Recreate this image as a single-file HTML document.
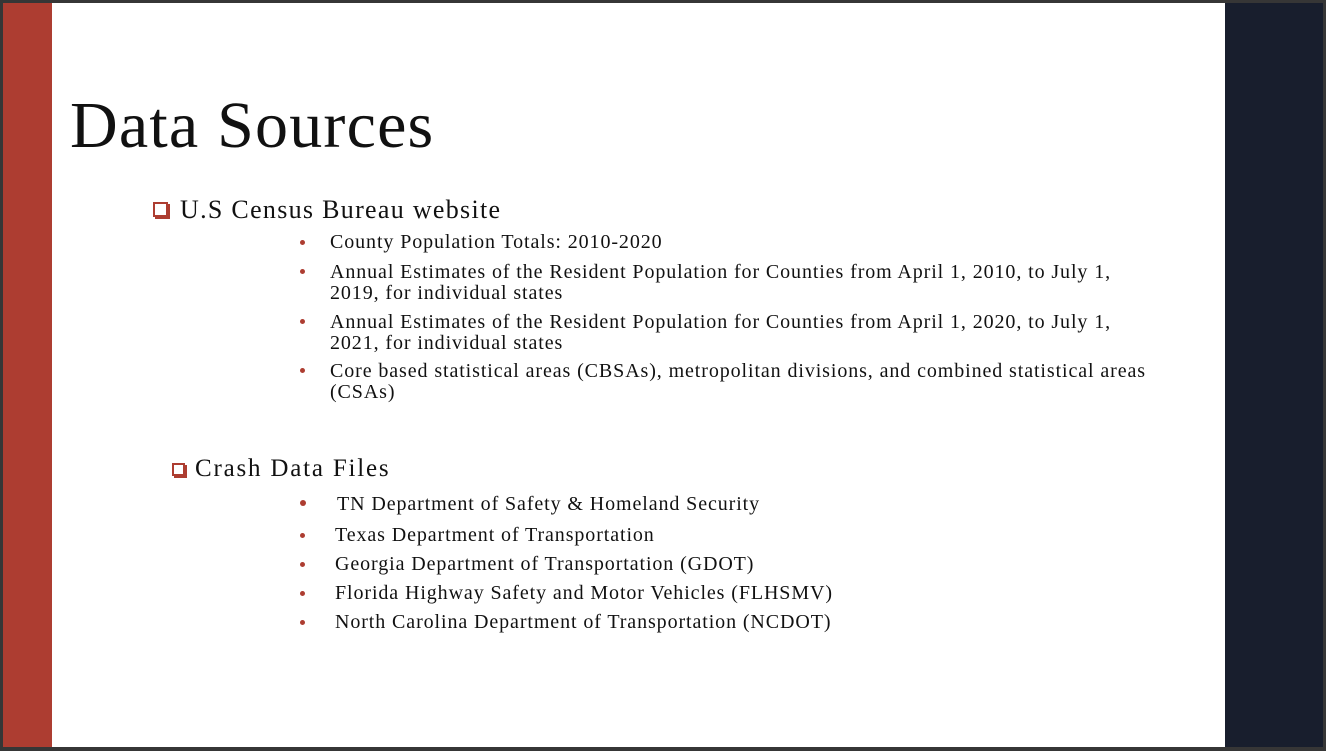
<!DOCTYPE html>
<html><head><meta charset="utf-8"><style>
html,body{margin:0;padding:0;}
body{width:1326px;height:751px;background:#363636;position:relative;overflow:hidden;font-family:"Liberation Serif","DejaVu Serif",serif;color:#111;}
.slide{position:absolute;left:3px;top:3px;width:1320px;height:744px;background:#fff;}
.red{position:absolute;left:3px;top:3px;width:49px;height:744px;background:#ad3d31;}
.navy{position:absolute;left:1225px;top:3px;width:98px;height:744px;background:#181e2d;}
.t{position:absolute;white-space:nowrap;}
h1{position:absolute;left:70px;top:86px;margin:0;font-weight:normal;font-size:66px;line-height:80px;letter-spacing:1.2px;}
.h2{font-size:26px;letter-spacing:1.3px;}
.b{font-size:20px;line-height:21px;letter-spacing:0.9px;}
.dot{position:absolute;width:5px;height:5px;border-radius:50%;background:#ad3d31;}
.box{position:absolute;border:2px solid #ad3d31;box-shadow:2px 2px 0 #ad3d31;background:#fff;}
</style></head><body>
<div class="slide"></div>
<div class="red"></div>
<div class="navy"></div>
<h1>Data Sources</h1>
<div class="box" style="left:153px;top:202px;width:11px;height:11px;"></div>
<div class="t h2" style="left:180px;top:195px;">U.S Census Bureau website</div>
<div class="dot" style="left:300px;top:240px"></div>
<div class="t b" style="left:330px;top:232px;">County Population Totals: 2010-2020</div>
<div class="dot" style="left:300px;top:269px"></div>
<div class="t b" style="left:330px;top:262px;">Annual Estimates of the Resident Population for Counties from April 1, 2010, to July 1,<br>2019, for individual states</div>
<div class="dot" style="left:300px;top:319px"></div>
<div class="t b" style="left:330px;top:312px;">Annual Estimates of the Resident Population for Counties from April 1, 2020, to July 1,<br>2021, for individual states</div>
<div class="dot" style="left:300px;top:368px"></div>
<div class="t b" style="left:330px;top:361px;">Core based statistical areas (CBSAs), metropolitan divisions, and combined statistical areas<br>(CSAs)</div>
<div class="box" style="left:172px;top:463px;width:9px;height:9px;"></div>
<div class="t" style="left:195px;top:455px;font-size:25px;letter-spacing:1.8px;">Crash Data Files</div>
<div class="dot" style="left:300px;top:500px;width:6px;height:6px"></div>
<div class="t b" style="left:337px;top:494px;">TN Department of Safety &amp; Homeland Security</div>
<div class="dot" style="left:300px;top:533px"></div>
<div class="t b" style="left:335px;top:525px;">Texas Department of Transportation</div>
<div class="dot" style="left:300px;top:562px"></div>
<div class="t b" style="left:335px;top:554px;">Georgia Department of Transportation (GDOT)</div>
<div class="dot" style="left:300px;top:591px"></div>
<div class="t b" style="left:335px;top:583px;">Florida Highway Safety and Motor Vehicles (FLHSMV)</div>
<div class="dot" style="left:300px;top:620px"></div>
<div class="t b" style="left:335px;top:612px;">North Carolina Department of Transportation (NCDOT)</div>
</body></html>
